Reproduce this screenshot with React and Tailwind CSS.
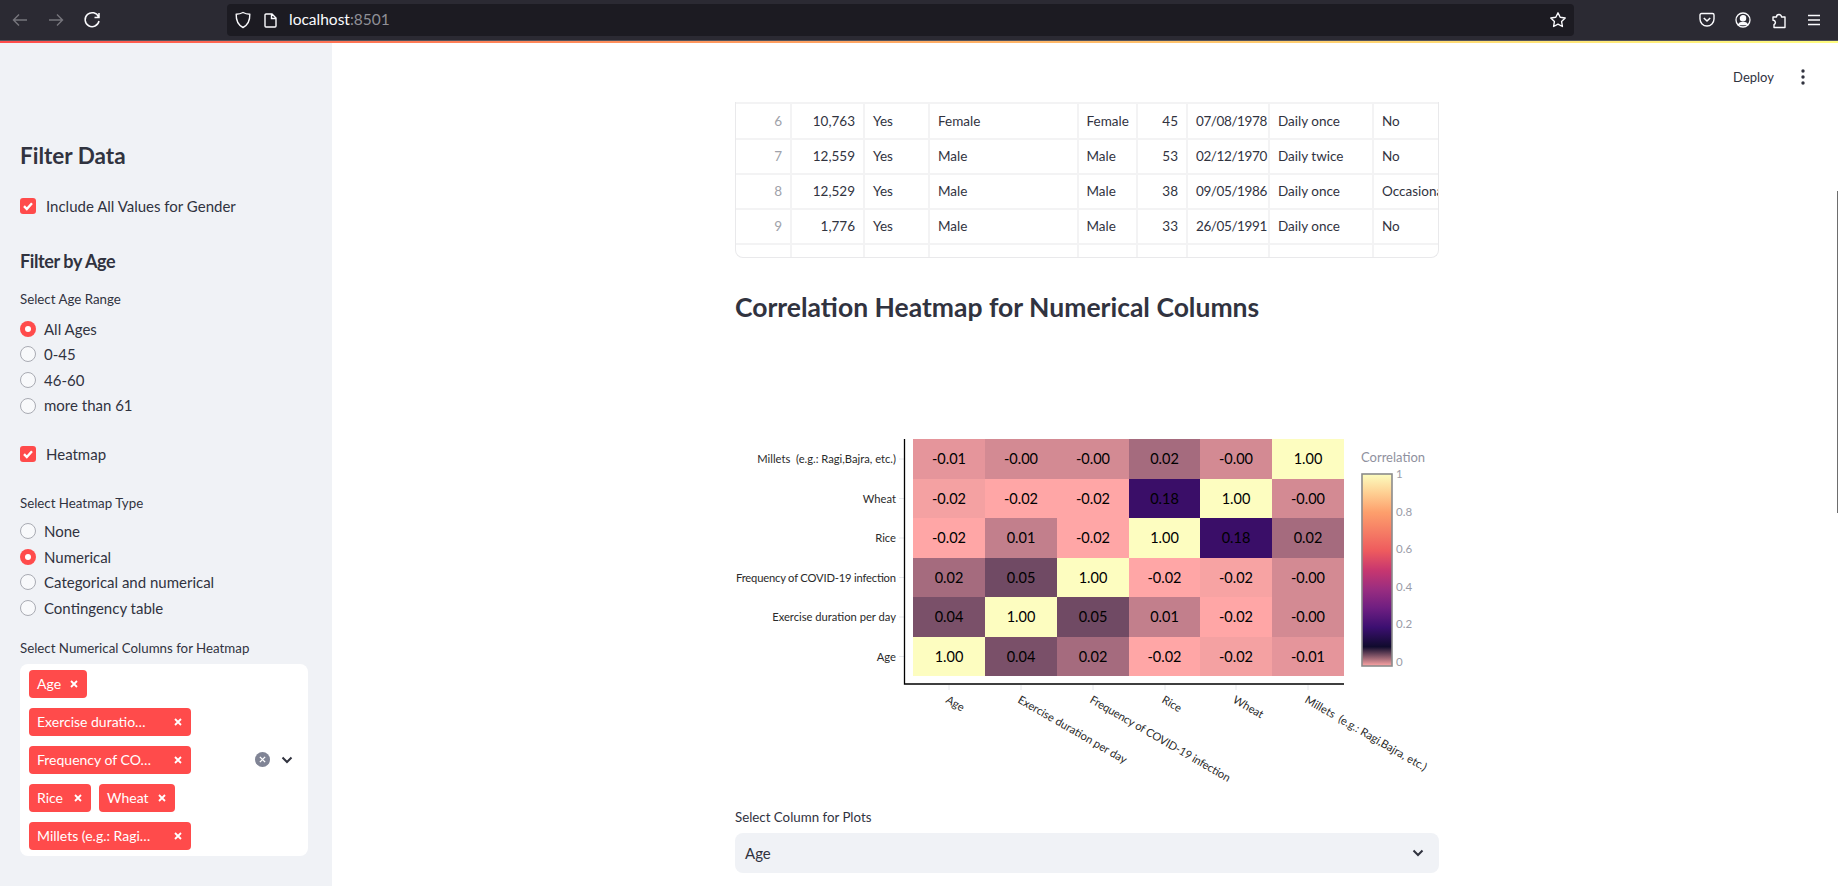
import React from "react";

const tableRows = [
  ["6", "10,763", "Yes", "Female", "Female", "45", "07/08/1978", "Daily once", "No"],
  ["7", "12,559", "Yes", "Male", "Male", "53", "02/12/1970", "Daily twice", "No"],
  ["8", "12,529", "Yes", "Male", "Male", "38", "09/05/1986", "Daily once", "Occasional"],
  ["9", "1,776", "Yes", "Male", "Male", "33", "26/05/1991", "Daily once", "No"],
];

// heatmap values, top row first, with the colour of each cell
const heatRows = [
  { label: "Millets  (e.g.: Ragi,Bajra, etc.)", cells: [["-0.01", "#e5959b"], ["-0.00", "#d38a93"], ["-0.00", "#d38a93"], ["0.02", "#a56b7e"], ["-0.00", "#d38a93"], ["1.00", "#fdfdc0"]] },
  { label: "Wheat", cells: [["-0.02", "#f4a1a2"], ["-0.02", "#ffa6a6"], ["-0.02", "#ffa6a6"], ["0.18", "#3a0e68"], ["1.00", "#fdfdc0"], ["-0.00", "#d38a93"]] },
  { label: "Rice", cells: [["-0.02", "#ffa6a6"], ["0.01", "#c27f8c"], ["-0.02", "#ffa6a6"], ["1.00", "#fdfdc0"], ["0.18", "#3a0e68"], ["0.02", "#a56b7e"]] },
  { label: "Frequency of COVID-19 infection", length: 160, cells: [["0.02", "#a56b7e"], ["0.05", "#704a64"], ["1.00", "#fdfdc0"], ["-0.02", "#ffa6a6"], ["-0.02", "#f7a3a3"], ["-0.00", "#d38a93"]] },
  { label: "Exercise duration per day", cells: [["0.04", "#7a5069"], ["1.00", "#fdfdc0"], ["0.05", "#704a64"], ["0.01", "#c27f8c"], ["-0.02", "#ffa6a6"], ["-0.00", "#d38a93"]] },
  { label: "Age", cells: [["1.00", "#fdfdc0"], ["0.04", "#7a5069"], ["0.02", "#a56b7e"], ["-0.02", "#ffa6a6"], ["-0.02", "#f4a1a2"], ["-0.01", "#e5959b"]] },
];

const colX = [913, 985, 1057, 1129, 1200, 1272, 1344];
const rowY = [439, 479, 518, 558, 597, 637, 676];
const xLabels = [
  { text: "Age" },
  { text: "Exercise duration per day" },
  { text: "Frequency of COVID-19 infection", length: 160 },
  { text: "Rice" },
  { text: "Wheat" },
  { text: "Millets  (e.g.: Ragi,Bajra, etc.)" },
];
const tickX = [949, 1021, 1093, 1165, 1236, 1308];

function CheckRow({ label }) {
  return (
    <div className="flex h-6 items-center">
      <span className="flex h-4 w-4 items-center justify-center rounded-[3px] bg-[#ff4b4b]">
        <svg width="12" height="12" viewBox="0 0 12 12" fill="none" stroke="white" strokeWidth="2.4">
          <path d="M2 6.2 L4.8 9 L10 3.2" />
        </svg>
      </span>
      <span className="ml-[10px] text-[15px] text-[#31333f]">{label}</span>
    </div>
  );
}

function RadioRow({ label, checked }) {
  return (
    <div className="flex h-[25.6px] items-center">
      {checked ? (
        <span className="flex h-4 w-4 items-center justify-center rounded-full bg-[#ff4b4b]">
          <span className="h-[6px] w-[6px] rounded-full bg-white" />
        </span>
      ) : (
        <span className="h-4 w-4 rounded-full border border-[#a9abb3] bg-[#f8f9fb]" />
      )}
      <span className="ml-2 text-[15px] text-[#31333f]">{label}</span>
    </div>
  );
}

function Tag({ label, width }) {
  return (
    <span className={`flex h-7 items-center justify-between rounded bg-[#ff4b4b] pl-2 pr-[9px] text-[14px] text-white ${width}`}>
      <span className="whitespace-nowrap">{label}</span>
      <svg width="8" height="8" viewBox="0 0 8 8" stroke="white" strokeWidth="1.8">
        <path d="M1 1 L7 7 M7 1 L1 7" />
      </svg>
    </span>
  );
}

function Chevron({ className }) {
  return (
    <svg className={className} width="12" height="8" viewBox="0 0 12 8" fill="none" stroke="#31333f" strokeWidth="2">
      <path d="M1.5 1.5 L6 6 L10.5 1.5" />
    </svg>
  );
}

function Sidebar() {
  return (
    <aside className="flex h-[843px] w-[332px] shrink-0 flex-col bg-[#f0f2f6] pl-5 pt-[97px] text-[#31333f]">
      <h2 className="h-8 text-[22.5px] leading-8 font-bold">Filter Data</h2>
      <div className="mt-[22px]">
        <CheckRow label="Include All Values for Gender" />
      </div>
      <h3 className="mt-[29px] h-7 text-[18px] leading-7 font-bold tracking-[-0.4px]">Filter by Age</h3>
      <p className="mt-[14px] h-5 text-[13.3px] leading-5">Select Age Range</p>
      <div className="mt-[7px]">
        <RadioRow label="All Ages" checked />
        <RadioRow label="0-45" />
        <RadioRow label="46-60" />
        <RadioRow label="more than 61" />
      </div>
      <div className="mt-6">
        <CheckRow label="Heatmap" />
      </div>
      <p className="mt-[27px] h-5 text-[13.3px] leading-5">Select Heatmap Type</p>
      <div className="mt-[5px]">
        <RadioRow label="None" />
        <RadioRow label="Numerical" checked />
        <RadioRow label="Categorical and numerical" />
        <RadioRow label="Contingency table" />
      </div>
      <p className="mt-[17px] h-5 text-[13.3px] leading-5">Select Numerical Columns for Heatmap</p>
      <div className="mt-[6px] flex h-[192px] w-[288px] items-center rounded-lg bg-white pl-[9px]">
        <div className="flex w-[220px] flex-wrap gap-x-2 gap-y-[10px]">
          <Tag label="Age" width="w-[58px]" />
          <Tag label="Exercise duratio…" width="w-[162px]" />
          <Tag label="Frequency of CO…" width="w-[162px]" />
          <Tag label="Rice" width="w-[62px]" />
          <Tag label="Wheat" width="w-[76px]" />
          <Tag label="Millets (e.g.: Ragi…" width="w-[162px]" />
        </div>
        <span className="ml-[6px] flex h-[15px] w-[15px] items-center justify-center rounded-full bg-[#808495]">
          <svg width="7" height="7" viewBox="0 0 8 8" stroke="white" strokeWidth="1.6">
            <path d="M1 1 L7 7 M7 1 L1 7" />
          </svg>
        </span>
        <Chevron className="ml-[11px]" />
      </div>
    </aside>
  );
}

function BrowserBar() {
  return (
    <div className="flex h-[41px] items-center bg-[#2b2a33] border-b border-[#55545c] text-[#fbfbfe]">
      <svg className="ml-[12px] shrink-0" width="90" height="24" viewBox="12 8 90 24" fill="none" strokeWidth="1.4">
        <path d="M27 20 H13.5 M19 14.5 L13.5 20 L19 25.5" stroke="#76757c" />
        <path d="M49 20 H62.5 M57 14.5 L62.5 20 L57 25.5" stroke="#76757c" />
        <path d="M98.6 17 A7 7 0 1 0 99 21 M99 13 V17.5 H94.5" stroke="#fbfbfe" strokeWidth="1.5" />
      </svg>
      <div className="ml-[125px] flex h-8 w-[1347px] items-center rounded bg-[#1c1b22]">
        <svg className="ml-[8px] shrink-0" width="16" height="18" viewBox="0 0 16 18" fill="none" stroke="#fbfbfe" strokeWidth="1.4">
          <path d="M8 1.5 C10 2.6 12.5 3.2 14.8 3.3 C15 9 13 14 8 16.5 C3 14 1 9 1.2 3.3 C3.5 3.2 6 2.6 8 1.5 Z" />
        </svg>
        <svg className="ml-[13px] shrink-0" width="13" height="15" viewBox="0 0 13 15" fill="none" stroke="#fbfbfe" strokeWidth="1.4">
          <path d="M1 2 A1 1 0 0 1 2 1 H8 L12 5 V13 A1 1 0 0 1 11 14 H2 A1 1 0 0 1 1 13 Z M7.5 1 V5.5 H12" />
        </svg>
        <span className="ml-[12px] text-[15.5px] text-[#fbfbfe]">
          localhost<span className="text-[#8f8f96]">:8501</span>
        </span>
        <svg className="ml-auto mr-[7px] shrink-0" width="18" height="18" viewBox="0 0 18 18" fill="none" stroke="#fbfbfe" strokeWidth="1.4" strokeLinejoin="round">
          <path d="M9 1.8 L11.2 6.3 L16.2 7 L12.6 10.5 L13.4 15.5 L9 13.1 L4.6 15.5 L5.4 10.5 L1.8 7 L6.8 6.3 Z" />
        </svg>
      </div>
      <svg className="ml-[125px] shrink-0" width="16" height="16" viewBox="0 0 16 16" fill="none" stroke="#fbfbfe" strokeWidth="1.4">
        <path d="M1 3 A1.5 1.5 0 0 1 2.5 1.5 H13.5 A1.5 1.5 0 0 1 15 3 V7 A7 7 0 0 1 1 7 Z" />
        <path d="M4.8 6 L8 9 L11.2 6" strokeWidth="1.6" />
      </svg>
      <svg className="ml-[20px] shrink-0" width="16" height="16" viewBox="0 0 16 16" fill="none" stroke="#fbfbfe" strokeWidth="1.3">
        <circle cx="8" cy="8" r="7" />
        <circle cx="8" cy="6.2" r="2.6" fill="#fbfbfe" />
        <path d="M3.5 12.5 C5 9.8 11 9.8 12.5 12.5 Z" fill="#fbfbfe" />
      </svg>
      <svg className="ml-[20px] shrink-0" width="16" height="18" viewBox="0 0 16 18" fill="none" stroke="#fbfbfe" strokeWidth="1.4" strokeLinejoin="round">
        <path d="M3 16.5 H14 V6 H10.5 A2.5 2.5 0 1 0 5.5 6 H2 V9.2 A2.3 2.3 0 0 1 3 13.6 Z" />
      </svg>
      <svg className="ml-[20px] shrink-0" width="14" height="12" viewBox="0 0 14 12" stroke="#fbfbfe" strokeWidth="1.4">
        <path d="M1 1.5 H13 M1 6 H13 M1 10.5 H13" />
      </svg>
    </div>
  );
}

function DataTable() {
  const grid = "grid grid-cols-[56px_73px_65px_148.5px_59.5px_50px_82px_104px_65px]";
  return (
    <div className="h-[156px] overflow-hidden rounded-b-lg border-x border-b border-[#e9e9eb] text-[13.5px] text-[#31333f]">
      {tableRows.map((row) => (
        <div key={row[0]} className={`${grid} h-[35px] border-t-2 border-[#f3f3f4] first:h-[36px]`}>
          {row.map((cell, i) => {
            const right = i === 0 || i === 1 || i === 5;
            return (
              <div
                key={i}
                className={`flex items-center overflow-hidden whitespace-nowrap border-r-2 border-[#f3f3f4] last:border-r-0 ${
                  right ? "justify-end pr-2" : "pl-2"
                } ${i === 0 ? "text-[#a0a2aa]" : ""} ${i === 6 ? "tracking-[-0.4px]" : ""}`}
              >
                {cell}
              </div>
            );
          })}
        </div>
      ))}
      <div className={`${grid} h-[35px] border-t-2 border-[#f3f3f4]`}>
        {[0, 1, 2, 3, 4, 5, 6, 7].map((i) => (
          <div key={i} className="border-r-2 border-[#f3f3f4]" />
        ))}
      </div>
    </div>
  );
}

function Heatmap() {
  return (
    <svg className="block" width="704" height="480" viewBox="735 327 704 480" fontFamily="Lato, sans-serif">
      <defs>
        <linearGradient id="magmaBar" x1="0" y1="0" x2="0" y2="1">
          <stop offset="0" stopColor="#fcfdbf" />
          <stop offset="0.1" stopColor="#fecf92" />
          <stop offset="0.2" stopColor="#fd9f6c" />
          <stop offset="0.4" stopColor="#ee5b5e" />
          <stop offset="0.5" stopColor="#c8376f" />
          <stop offset="0.6" stopColor="#9a2d80" />
          <stop offset="0.7" stopColor="#6e1e81" />
          <stop offset="0.8" stopColor="#3b0f70" />
          <stop offset="0.9" stopColor="#100b2d" />
          <stop offset="1" stopColor="#ffa6a6" />
        </linearGradient>
      </defs>

      {heatRows.map((row, r) => (
        <g key={row.label}>
          <line x1="899" x2="904" y1={(rowY[r] + rowY[r + 1]) / 2} y2={(rowY[r] + rowY[r + 1]) / 2} stroke="#e6e8ec" />
          <text x="896" y={(rowY[r] + rowY[r + 1]) / 2 + 4} textAnchor="end" fontSize="11.2" fill="#2a2a2a" xmlSpace="preserve" textLength={row.length}>
            {row.label}
          </text>
          {row.cells.map(([value, color], c) => (
            <g key={c}>
              <rect x={colX[c]} y={rowY[r]} width={colX[c + 1] - colX[c]} height={rowY[r + 1] - rowY[r]} fill={color} />
              <text x={(colX[c] + colX[c + 1]) / 2} y={(rowY[r] + rowY[r + 1]) / 2 + 5} textAnchor="middle" fontSize="14.5" fill="#000">
                {value}
              </text>
            </g>
          ))}
        </g>
      ))}

      <path d="M904.5 439 V684 H1344" fill="none" stroke="#000" strokeWidth="1.3" />
      {xLabels.map((label, i) => (
        <g key={label.text}>
          <line x1={tickX[i]} x2={tickX[i]} y1="685" y2="690" stroke="#e6e8ec" />
          <text x={tickX[i] - 4} y="702" fontSize="11.2" fill="#2a2a2a" transform={`rotate(30 ${tickX[i] - 4} 702)`} xmlSpace="preserve" textLength={label.length}>
            {label.text}
          </text>
        </g>
      ))}

      <text x="1361" y="462" fontSize="13" fill="#8f919e">Correlation</text>
      <rect x="1362" y="474" width="30" height="192" fill="url(#magmaBar)" stroke="#8b8b8b" strokeWidth="1.6" />
      {[["1", 478], ["0.8", 516], ["0.6", 553], ["0.4", 591], ["0.2", 628], ["0", 666]].map(([t, y]) => (
        <text key={t} x="1396" y={y} fontSize="11.5" fill="#9a9ca8">{t}</text>
      ))}
    </svg>
  );
}

export default function App() {
  return (
    <div className="relative h-[886px] overflow-hidden bg-white font-['Lato',sans-serif]">
      <BrowserBar />
      <div className="h-[2px] bg-linear-to-r from-[#ff4b4b] to-[#fffd80]" />
      <div className="flex">
        <Sidebar />
        <main className="min-w-0 flex-1">
          <div className="flex h-[59px] items-start justify-end pt-[24px] pr-[33px]">
            <span className="text-[13px] leading-5 text-[#31333f]">Deploy</span>
            <svg className="ml-[27px] mt-[2px]" width="4" height="16" viewBox="0 0 4 16" fill="#31333f">
              <circle cx="2" cy="2" r="1.7" />
              <circle cx="2" cy="8" r="1.7" />
              <circle cx="2" cy="14" r="1.7" />
            </svg>
          </div>
          <div className="ml-[403px] w-[704px]">
            <DataTable />
            <h1 className="mt-[29px] h-10 whitespace-nowrap text-[26.5px] leading-10 font-bold text-[#31333f]">
              Correlation Heatmap for Numerical Columns
            </h1>
            <Heatmap />
            <p className="h-5 text-[13.3px] leading-5 text-[#31333f]">Select Column for Plots</p>
            <div className="mt-[6px] flex h-10 items-center justify-between rounded-lg bg-[#f0f2f6] pl-[10px] pr-[15px] text-[15px] text-[#31333f]">
              <span>Age</span>
              <Chevron />
            </div>
          </div>
        </main>
      </div>
      {/* page scrollbar sitting over the right edge */}
      <div className="absolute right-0 top-[191px] h-[322px] w-px bg-[#6e6e6e]" />
    </div>
  );
}
